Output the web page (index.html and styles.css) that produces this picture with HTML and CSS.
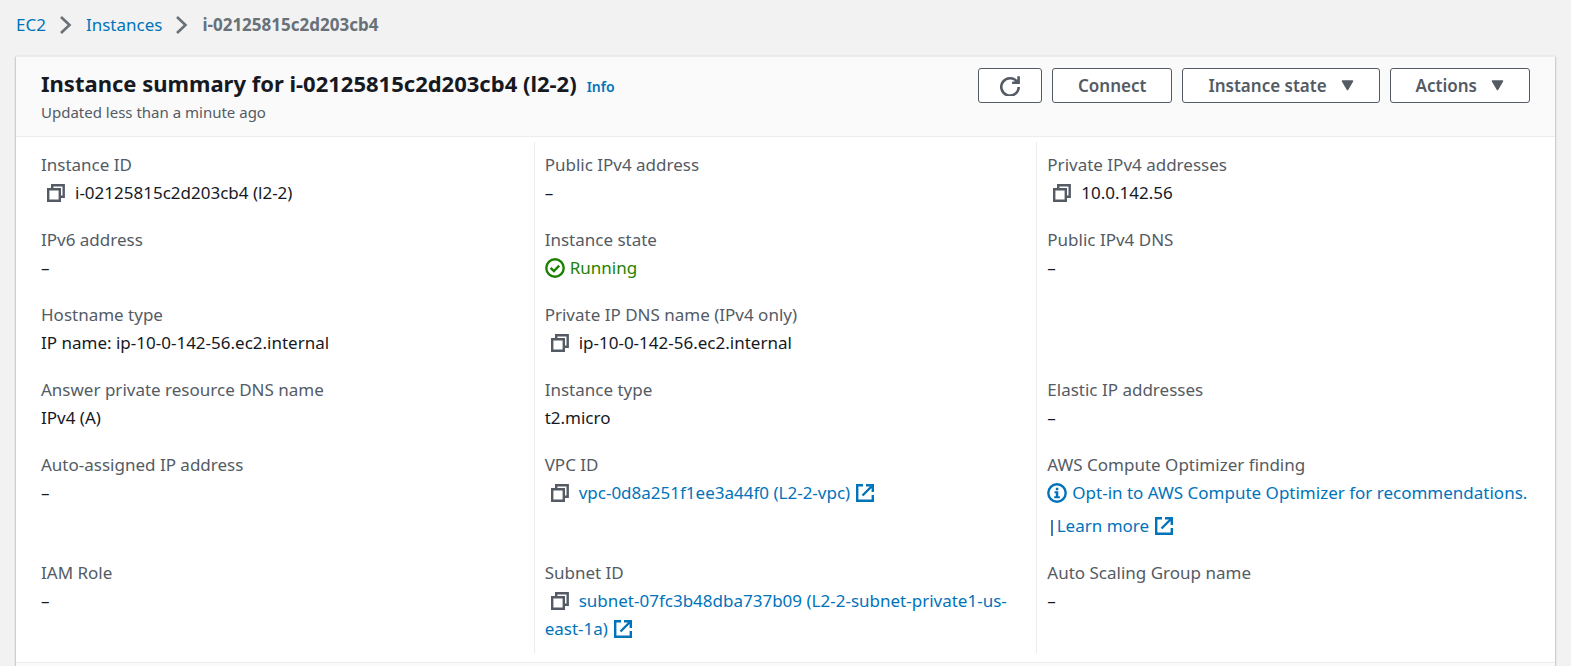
FILE: index.html
```html
<!DOCTYPE html>
<html lang="en">
<head>
<meta charset="utf-8">
<meta name="viewport" content="width=device-width, initial-scale=1">
<title>Instance summary | EC2</title>
<link rel="stylesheet" href="styles.css">
</head>
<body>
<svg class="sprite" aria-hidden="true">
  <symbol id="chevron" viewBox="0 0 12 20"><path d="M1 2l8.500 8L1 18" fill="none" stroke="currentColor" stroke-width="2.600"/></symbol>
  <symbol id="copy" viewBox="0 0 18 18"><path d="M1.200 5.200h11.600v11.600H1.200zM5.200 5V1.300h11.500v11.400H13" fill="none" stroke="currentColor" stroke-width="2.400"/></symbol>
  <symbol id="external" viewBox="0 0 18 18"><path d="M7 1.200H1.200v15.600h15.600V11M10 1.200h6.800V8M16.500 1.500L6.500 11.500" fill="none" stroke="currentColor" stroke-width="2.400"/></symbol>
  <symbol id="check" viewBox="0 0 20 20"><g fill="none" stroke="currentColor" stroke-width="2.400"><circle cx="10" cy="10" r="8.700"/><path d="M5.600 9.800l3.300 3.200 5.300-5.400"/></g></symbol>
  <symbol id="info" viewBox="0 0 20 20"><circle cx="10" cy="10" r="8.700" fill="none" stroke="currentColor" stroke-width="2.400"/><path d="M8.800 4.800h2.500v2.400H8.800zM7.500 8.300h3.800v4.900h1.500v2H7.200v-2h1.600v-2.900H7.500z" fill="currentColor"/></symbol>
  <symbol id="refresh" viewBox="0 0 20 20"><path d="M17.200 6A8.700 8.700 0 1 0 18.700 11M18.600 .200v6.600h-6.500" fill="none" stroke="currentColor" stroke-width="2.600"/></symbol>
  <symbol id="caret" viewBox="0 0 13 11"><path d="M1.500 1h10L6.500 9.500z" fill="currentColor" stroke="currentColor" stroke-width="1.500" stroke-linejoin="round"/></symbol>
</svg>

<nav class="breadcrumbs" aria-label="Breadcrumbs">
  <a href="#">EC2</a>
  <svg class="chevron"><use href="#chevron"/></svg>
  <a href="#">Instances</a>
  <svg class="chevron"><use href="#chevron"/></svg>
  <span class="current" aria-current="page">i-02125815c2d203cb4</span>
</nav>

<main class="card">
  <header class="card-header">
    <div class="heading">
      <div class="title-row">
        <h1>Instance summary for i-02125815c2d203cb4 (l2-2)</h1>
        <a class="info-link" href="#">Info</a>
      </div>
      <p class="updated">Updated less than a minute ago</p>
    </div>
    <div class="actions">
      <button type="button" class="btn btn-icon" aria-label="Refresh"><svg class="icon-20"><use href="#refresh"/></svg></button>
      <button type="button" class="btn">Connect</button>
      <button type="button" class="btn">Instance state<svg class="caret"><use href="#caret"/></svg></button>
      <button type="button" class="btn">Actions<svg class="caret"><use href="#caret"/></svg></button>
    </div>
  </header>

  <dl class="details">
    <div class="field"><dt>Instance ID</dt><dd><button type="button" class="copy" aria-label="Copy instance ID"><svg class="icon-18"><use href="#copy"/></svg></button>i-02125815c2d203cb4 (l2-2)</dd></div>
    <div class="field"><dt>Public IPv4 address</dt><dd>–</dd></div>
    <div class="field"><dt>Private IPv4 addresses</dt><dd><button type="button" class="copy" aria-label="Copy private IPv4 address"><svg class="icon-18"><use href="#copy"/></svg></button>10.0.142.56</dd></div>

    <div class="field"><dt>IPv6 address</dt><dd>–</dd></div>
    <div class="field"><dt>Instance state</dt><dd class="running"><svg class="icon-20 status"><use href="#check"/></svg>Running</dd></div>
    <div class="field"><dt>Public IPv4 DNS</dt><dd>–</dd></div>

    <div class="field"><dt>Hostname type</dt><dd>IP name: ip-10-0-142-56.ec2.internal</dd></div>
    <div class="field"><dt>Private IP DNS name (IPv4 only)</dt><dd><button type="button" class="copy" aria-label="Copy private DNS name"><svg class="icon-18"><use href="#copy"/></svg></button>ip-10-0-142-56.ec2.internal</dd></div>
    <div class="field"></div>

    <div class="field"><dt>Answer private resource DNS name</dt><dd>IPv4 (A)</dd></div>
    <div class="field"><dt>Instance type</dt><dd>t2.micro</dd></div>
    <div class="field"><dt>Elastic IP addresses</dt><dd>–</dd></div>

    <div class="field"><dt>Auto-assigned IP address</dt><dd>–</dd></div>
    <div class="field"><dt>VPC ID</dt><dd><button type="button" class="copy" aria-label="Copy VPC ID"><svg class="icon-18"><use href="#copy"/></svg></button><a href="#">vpc-0d8a251f1ee3a44f0 (L2-2-vpc)<svg class="icon-18 external"><use href="#external"/></svg></a></dd></div>
    <div class="field"><dt>AWS Compute Optimizer finding</dt><dd class="finding"><a href="#" class="opt-in"><svg class="icon-20 status"><use href="#info"/></svg>Opt-in to AWS Compute Optimizer for recommendations.</a><span>|<a href="#">Learn more<svg class="icon-18 external"><use href="#external"/></svg></a></span></dd></div>

    <div class="field"><dt>IAM Role</dt><dd>–</dd></div>
    <div class="field"><dt>Subnet ID</dt><dd><button type="button" class="copy" aria-label="Copy subnet ID"><svg class="icon-18"><use href="#copy"/></svg></button><a href="#">subnet-07fc3b48dba737b09 (L2-2-subnet-private1-us-east-1a)<svg class="icon-18 external"><use href="#external"/></svg></a></dd></div>
    <div class="field"><dt>Auto Scaling Group name</dt><dd>–</dd></div>
  </dl>
  <div class="card-footer"></div>
</main>
</body>
</html>
```
FILE: styles.css
```css
* {
  box-sizing: border-box;
}

body {
  display: flex;
  flex-direction: column;
  min-height: 100vh;
  margin: 0;
  padding: 0 16px;
  background: #f2f2f2;
  color: #16191f;
  font-family: "Noto Sans", "Open Sans", sans-serif;
  font-size: 17px;
  line-height: 28px;
}

a {
  color: #0073bb;
  text-decoration: none;
}

.sprite {
  position: absolute;
  width: 0;
  height: 0;
}

.icon-18 {
  width: 18px;
  height: 18px;
}

.icon-20 {
  width: 20px;
  height: 20px;
}

.breadcrumbs {
  display: flex;
  align-items: center;
  gap: 14px;
  padding: 11px 0 17px;
}

.chevron {
  width: 12px;
  height: 20px;
  color: #687078;
}

.current {
  color: #687078;
  font-weight: 700;
}

.card {
  display: flex;
  flex: 1;
  flex-direction: column;
  background: #fff;
  border-top: 1px solid #eaeded;
  box-shadow: 0 1px 2px rgba(0, 28, 36, 0.5);
}

.card-header {
  display: flex;
  align-items: flex-start;
  justify-content: space-between;
  padding: 11px 25px 13px;
  background: #fafafa;
  border-bottom: 1px solid #eaeded;
}

.title-row {
  display: flex;
  align-items: baseline;
  gap: 10px;
}

h1 {
  margin: 0;
  font-size: 22px;
  font-weight: 700;
  line-height: 30px;
}

.info-link {
  font-size: 14px;
  font-weight: 600;
}

.updated {
  margin: 0;
  color: #545b64;
  font-size: 15px;
  line-height: 22px;
}

.actions {
  display: flex;
  gap: 10px;
}

.btn {
  display: flex;
  align-items: center;
  gap: 14px;
  height: 35px;
  padding: 0 25px;
  background: #fff;
  border: 1px solid #545b64;
  border-radius: 3px;
  color: #545b64;
  font: inherit;
  font-weight: 600;
}

.btn-icon {
  padding: 0 21px;
}

.caret {
  width: 13px;
  height: 11px;
}

.details {
  display: grid;
  grid-template-columns: repeat(3, minmax(0, 1fr));
  margin: 0;
  padding: 5px 16px 9px 15px;
}

.field {
  padding: 9px 10px 10px;
}

.field:not(:nth-child(3n + 1)) {
  border-left: 1px solid #eaeded;
}

dt {
  color: #545b64;
}

dd {
  margin: 0;
}

.copy {
  margin: 0 10px 0 6px;
  padding: 0;
  background: none;
  border: 0;
  color: #545b64;
  line-height: 0;
  vertical-align: -3px;
}

.status {
  margin-right: 5px;
  vertical-align: -4px;
}

.external {
  margin-left: 6px;
  vertical-align: -3px;
}

.running {
  color: #1d8102;
}

.finding {
  display: flex;
  flex-direction: column;
  gap: 5px;
}

.opt-in {
  white-space: nowrap;
}

.card-footer {
  flex: 1;
  background: #fafafa;
  border-top: 1px solid #eaeded;
}
```
